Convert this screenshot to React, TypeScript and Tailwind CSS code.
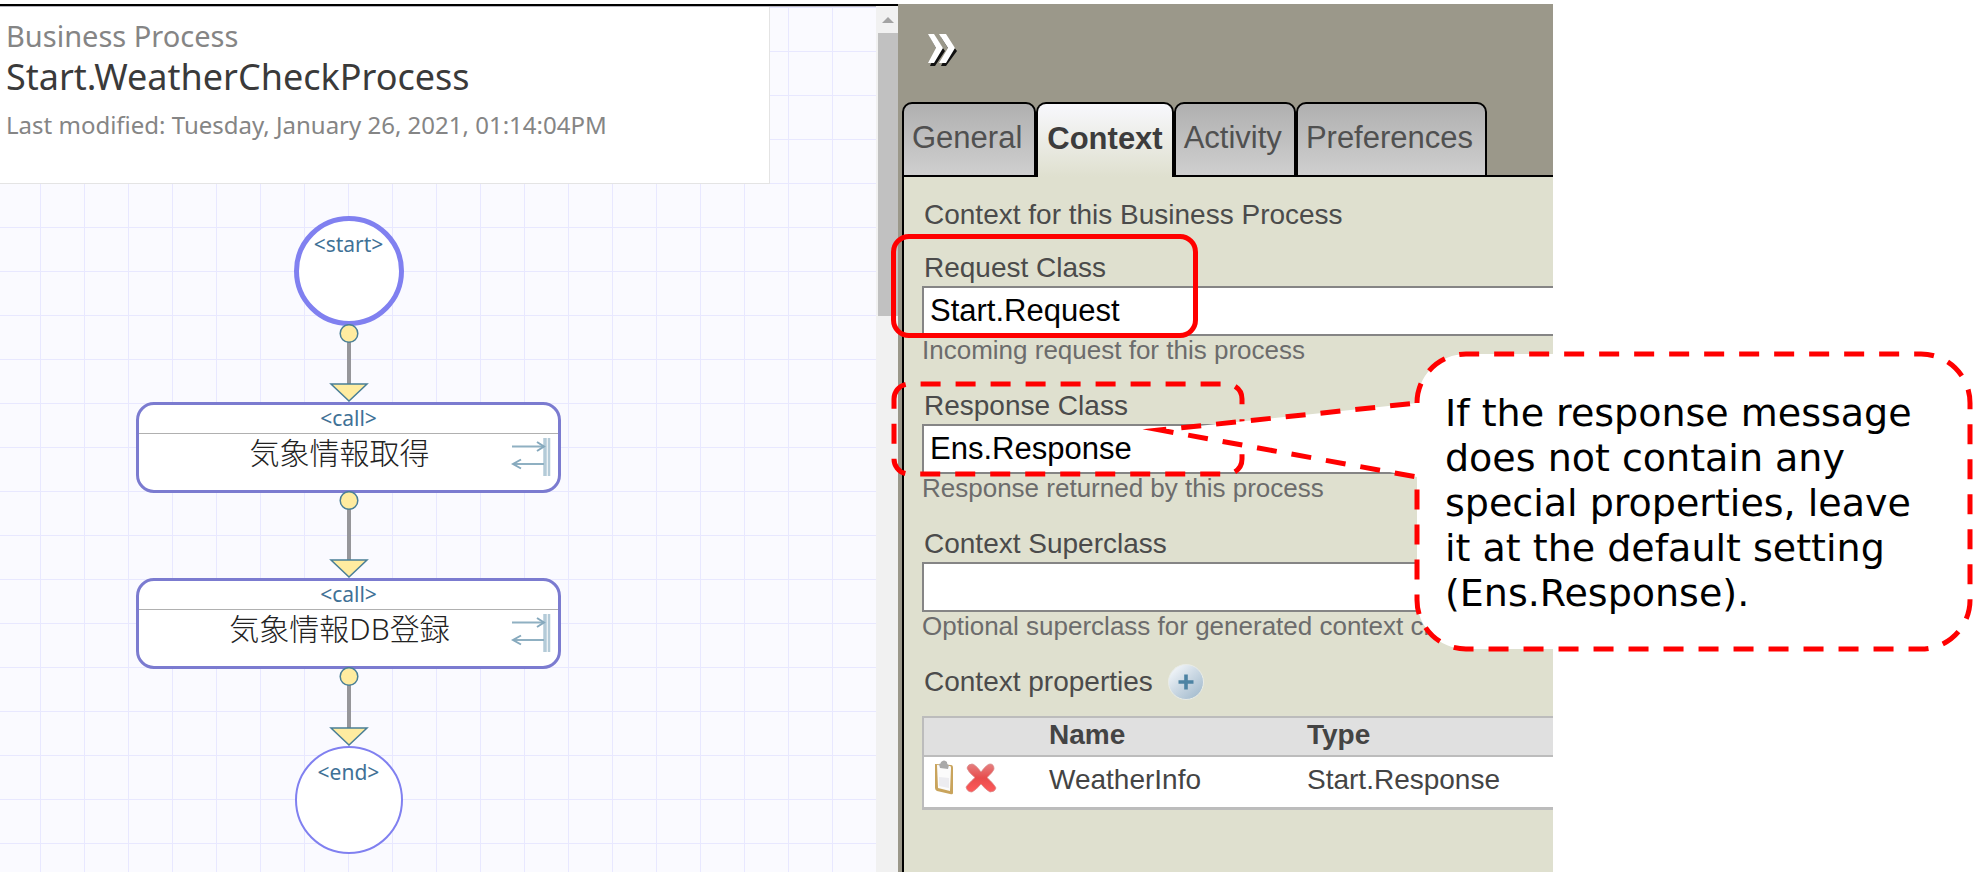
import type { ReactNode } from 'react';

type FieldProps = {
  id: string;
  label: string;
  value: string;
  hint: string;
  children?: ReactNode;
};

const TABS = ['General', 'Context', 'Activity', 'Preferences'];

const Connector = ({ height }: { height: number }) => (
  <svg width="40" height={height} viewBox={`0 0 40 ${height}`} className="-mt-[2px] shrink-0" aria-hidden="true">
    <line x1="20" y1="16" x2="20" y2={height - 16} stroke="#96969a" strokeWidth="4" />
    <circle cx="20" cy="9.5" r="8.8" fill="#ffeca0" stroke="#4a7f96" strokeWidth="1.5" />
    <path
      d={`M2 ${height - 18} H38 L20 ${height - 1} Z`}
      fill="#ffeca0"
      stroke="#4a7f96"
      strokeWidth="1.5"
    />
  </svg>
);

const CallIcon = () => (
  <svg width="40" height="38" viewBox="0 0 40 38" fill="none" className="mt-1 mr-[7px] shrink-0" aria-hidden="true">
    <path d="M34 0 V38" stroke="#b4cbd8" strokeWidth="3.5" />
    <path d="M38 0 V38" stroke="#b4cbd8" strokeWidth="2.5" />
    <path d="M1 8.5 H33 M33 26 H3" stroke="#8fb0c2" strokeWidth="2" />
    <path d="M26 4 L33 8.5 L26 13 M10 21.5 L2 26 L10 30.5" stroke="#86a9bd" strokeWidth="2" />
  </svg>
);

const CallNode = ({ name }: { name: string }) => (
  <div className="flex h-[91px] w-full flex-col overflow-hidden rounded-[18px] border-3 border-[#7b7bd0] bg-white">
    <div className="h-[29px] border-b border-[#b0b0b0] text-center font-['Noto_Sans',sans-serif] text-[21px] leading-[27px] text-[#3f7196]">
      &lt;call&gt;
    </div>
    <div className="flex pl-[29px]">
      <div className="flex-1 text-center font-['Noto_Sans','Noto_Sans_CJK_JP',sans-serif] text-[30px] leading-[38px] font-light text-[#222]">
        {name}
      </div>
      <CallIcon />
    </div>
  </div>
);

const Field = ({ id, label, value, hint, children }: FieldProps) => (
  <div className="relative mb-[26px]">
    <label htmlFor={id} className="mb-[2px] block pl-[2px] text-[28px] leading-8 text-[#4b4b4b]">
      {label}
    </label>
    <input
      id={id}
      type="text"
      defaultValue={value}
      className="block h-[50px] w-full border-2 border-r-0 border-[#858585] bg-white pl-[6px] text-[31px] text-black outline-none"
    />
    <p className="text-[26px] leading-7 whitespace-nowrap text-[#6c6c6c]">{hint}</p>
    {children}
  </div>
);

const DiagramPanel = () => (
  <section className="flex border-t-2 border-black">
    <div className="flex-1 border-t border-[#b5b5bd] bg-[#fafaff] bg-[linear-gradient(to_right,#e8e8ff_1px,transparent_1px),linear-gradient(to_bottom,#e8e8ff_1px,transparent_1px)] bg-[size:44px_44px] bg-[position:40px_0px]">
      <header className="h-[177px] w-[770px] max-w-full border-r border-b border-[#e4e4e4] bg-white pt-[11px] pl-[6px] font-['Noto_Sans',sans-serif]">
        <p className="text-[29px] leading-[36px] text-[#858585]">Business Process</p>
        <h1 className="text-[36px] leading-[46px] text-[#3a3a3a]">Start.WeatherCheckProcess</h1>
        <p className="pt-[7px] text-[24px] leading-[36px] text-[#858585]">
          Last modified: Tuesday, January 26, 2021, 01:14:04PM
        </p>
      </header>

      <div className="mt-[32px] ml-[136px] flex w-[425px] flex-col items-center">
        <div className="h-[110px] w-[110px] rounded-full border-5 border-[#8080f0] bg-white pt-[9px] text-center font-['Noto_Sans',sans-serif] text-[21px] leading-7 text-[#3f7196]">
          &lt;start&gt;
        </div>
        <Connector height={78} />
        <CallNode name="気象情報取得" />
        <Connector height={87} />
        <CallNode name="気象情報DB登録" />
        <Connector height={79} />
        <div className="h-[108px] w-[108px] rounded-full border-2 border-[#8080f0] bg-white pt-[10px] text-center font-['Noto_Sans',sans-serif] text-[21px] leading-7 text-[#3f7196]">
          &lt;end&gt;
        </div>
      </div>
    </div>

    <div className="w-[22px] bg-[#f1f1f1] pl-[2px]">
      <div className="flex h-[27px] items-center justify-center">
        <div className="border-x-6 border-b-6 border-x-transparent border-b-[#a3a3a3]" />
      </div>
      <div className="h-[283px] bg-[#c1c1c1]" />
    </div>
  </section>
);

const Callout = () => (
  <>
    <svg
      width="1085"
      height="315"
      viewBox="0 0 1085 315"
      className="pointer-events-none absolute -top-[45px] -left-[34px] z-10 max-w-none"
      fill="none"
      stroke="#ff0000"
      strokeWidth="5"
      strokeDasharray="20 15"
      strokeMiterlimit="10"
      aria-hidden="true"
    >
      <path d="M6 54 A15 15 0 0 1 21 39 H339 A15 15 0 0 1 354 54 V114 A15 15 0 0 1 339 129 H21 A15 15 0 0 1 6 114 Z" />
      <path
        d="M529 58 A49 49 0 0 1 578 9 H1033 A49 49 0 0 1 1082 58 V255 A49 49 0 0 1 1033 304 H578 A49 49 0 0 1 529 255 V132 L272 85 Z"
        fill="#fff"
      />
    </svg>
    <p className="absolute top-[1px] left-[523px] z-20 font-['DejaVu_Sans',sans-serif] text-[38px] leading-[45px] whitespace-nowrap text-black">
      If the response message
      <br />
      does not contain any
      <br />
      special properties, leave
      <br />
      it at the default setting
      <br />
      (Ens.Response).
    </p>
  </>
);

const AddIcon = () => (
  <svg width="36" height="36" viewBox="0 0 36 36" aria-hidden="true">
    <defs>
      <linearGradient id="add-fill" x1="0" y1="0" x2="0.9" y2="1">
        <stop offset="0.1" stopColor="#f4f7fa" />
        <stop offset="0.5" stopColor="#ccd9e4" />
        <stop offset="1" stopColor="#9fb8cb" />
      </linearGradient>
    </defs>
    <circle cx="18" cy="18" r="17.5" fill="url(#add-fill)" stroke="#e9ece6" />
    <path d="M18 10.5 V25.5 M10.5 18 H25.5" stroke="#4d83a3" strokeWidth="3.6" />
  </svg>
);

const ClipboardIcon = () => (
  <svg width="22" height="36" viewBox="0 0 22 36" aria-hidden="true">
    <path d="M2 4 L18 5 Q20 5 20 8 L20 33 Q20 35 17 34 L4 31 Q2 30 2 28 Z" fill="#c9a45c" />
    <path d="M4 5 L17 6 Q18 6 18 8 L17 31 L5 28 Z" fill="#fbfbfb" />
    <path d="M6 17 L16 18 L16 28 L6 26 Z" fill="#ececf0" />
    <path d="M6 4 Q8 4 8 2 Q11 -1 14 2 Q14 5 16 5 L15 9 L7 8 Z" fill="#a9a9a9" />
  </svg>
);

const DeleteIcon = () => (
  <svg width="34" height="32" viewBox="0 0 34 32" aria-hidden="true">
    <defs>
      <linearGradient id="delete-fill" x1="0" y1="0" x2="0" y2="1">
        <stop offset="0" stopColor="#e58080" />
        <stop offset="0.5" stopColor="#e84c4c" />
        <stop offset="1" stopColor="#ff5a5a" />
      </linearGradient>
    </defs>
    <path
      d="M8 2 Q11 2 17 10 Q23 2 26 2 Q30 2 30 7 Q29 10 23 15.5 Q30 22 32 26 Q31 30 26 30 Q22 28 17 22 Q12 28 8 30 Q3 30 2 25 Q4 22 11 15.5 Q4 10 3 6 Q4 2 8 2 Z"
      fill="url(#delete-fill)"
      stroke="#d98a8a"
      strokeWidth="0.8"
    />
  </svg>
);

const PropertiesTable = () => (
  <table className="mt-4 w-full table-fixed border-collapse border-t-2 border-b-3 border-l-2 border-[#bcbcbc] bg-white text-left text-[28px] text-[#444]">
    <colgroup>
      <col className="w-[126px]" />
      <col className="w-[258px]" />
      <col />
    </colgroup>
    <thead className="bg-[#e0e0e0]">
      <tr className="h-[39px] border-b-2 border-[#bcbcbc] leading-8">
        <th aria-label="Actions" className="p-0" />
        <th className="p-0 pb-1">Name</th>
        <th className="p-0 pb-1">Type</th>
      </tr>
    </thead>
    <tbody>
      <tr className="h-[52px] leading-8">
        <td className="p-0 pl-[9px]">
          <div className="flex items-center gap-[9px] pb-2">
            <button type="button" aria-label="Edit">
              <ClipboardIcon />
            </button>
            <button type="button" aria-label="Delete">
              <DeleteIcon />
            </button>
          </div>
        </td>
        <td className="p-0 pb-1">WeatherInfo</td>
        <td className="p-0 pb-1">Start.Response</td>
      </tr>
    </tbody>
  </table>
);

const SettingsPanel = () => (
  <section className="flex flex-col bg-[#9b988a]">
    <div className="h-[98px] pt-[29px] pl-[29px]">
      <button type="button" aria-label="Collapse panel">
        <svg width="32" height="36" viewBox="0 0 32 36" aria-hidden="true">
          <path d="M3 4 H8 L18 18 L8 33 H3 L10 17 Z M14 4 H19 L30 18 L19 33 H14 L22 17 Z" fill="#111" />
          <path d="M1 1 H7 L16 15 L7 30 H1 L9 15 Z M12 1 H19 L28 15 L19 30 H12 L21 15 Z" fill="#fff" />
        </svg>
      </button>
    </div>

    <div role="tablist" className="flex pl-1">
      {TABS.map((tab) => (
        <button
          key={tab}
          type="button"
          role="tab"
          aria-selected={tab === 'Context'}
          className={
            tab === 'Context'
              ? 'h-[75px] rounded-t-[10px] border-2 border-b-0 border-black bg-linear-to-b from-[#f8f8fd] to-[#dfe0cf] px-[9px] pb-[3px] text-[31px] font-bold text-[#3c3c3c]'
              : 'h-[75px] rounded-t-[10px] border-2 border-black bg-linear-to-b from-[#b0b0b0] to-[#cfcfcf] pr-[12px] pl-[8px] pb-[2px] text-[31px] text-[#505050]'
          }
        >
          {tab}
        </button>
      ))}
      <div className="flex-1 border-b-2 border-black" />
    </div>

    <div className="ml-1 flex-1 border-l-2 border-black bg-[#dfe0cf] pt-[22px] pl-[18px]">
      <p className="mb-[21px] pl-[2px] text-[28px] leading-8 text-[#4b4b4b]">Context for this Business Process</p>

      <Field id="request-class" label="Request Class" value="Start.Request" hint="Incoming request for this process">
        <div className="pointer-events-none absolute -top-[18px] -left-[31px] h-[104px] w-[307px] rounded-[18px] border-5 border-[#ff0000]" />
      </Field>
      <Field id="response-class" label="Response Class" value="Ens.Response" hint="Response returned by this process">
        <Callout />
      </Field>
      <Field id="superclass" label="Context Superclass" value="" hint="Optional superclass for generated context class" />

      <div className="-mt-[2px] flex items-center gap-[15px] pl-[2px] text-[28px] leading-8 text-[#4b4b4b]">
        <h2>Context properties</h2>
        <button type="button" aria-label="Add property">
          <AddIcon />
        </button>
      </div>
      <PropertiesTable />
    </div>
  </section>
);

export default function App() {
  return (
    <main className="grid min-h-screen grid-cols-[898fr_655fr_420fr] overflow-hidden bg-white pt-1 font-['Liberation_Sans',Arial,sans-serif]">
      <DiagramPanel />
      <SettingsPanel />
    </main>
  );
}
